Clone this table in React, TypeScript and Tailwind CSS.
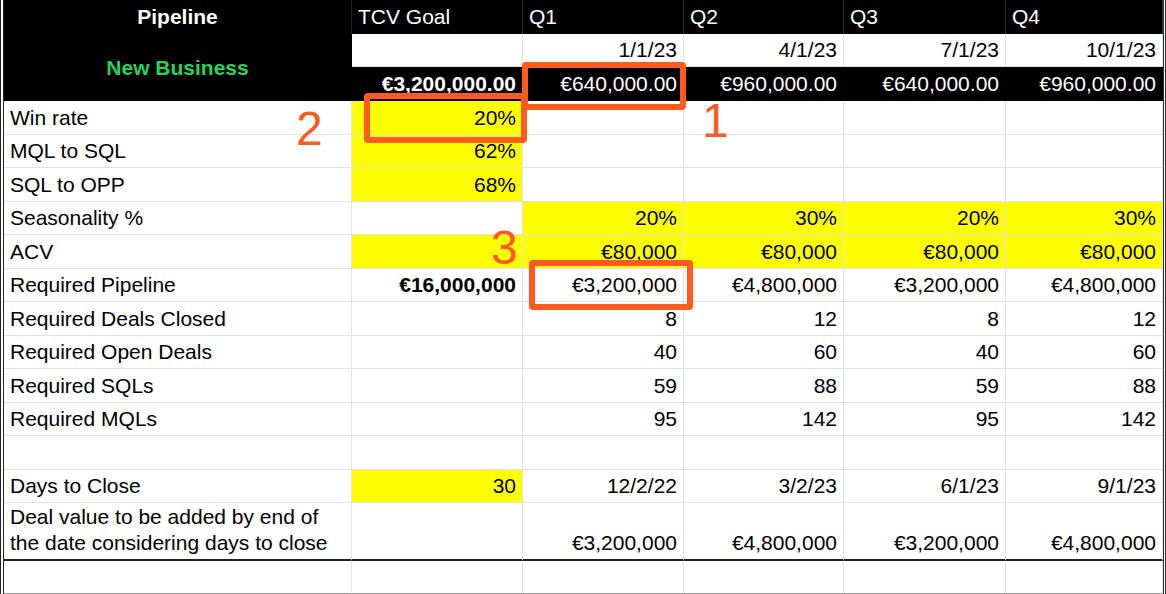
import React from "react";

// one cell of the sheet
type Cell = {
  text?: string;
  bg?: string;
  bold?: boolean;
};

const rows: { label: string; cells: Cell[] }[] = [
  {
    label: "Win rate",
    cells: [{ text: "20%", bg: "bg-[#ffff00]" }, {}, {}, {}, {}],
  },
  {
    label: "MQL to SQL",
    cells: [{ text: "62%", bg: "bg-[#ffff00]" }, {}, {}, {}, {}],
  },
  {
    label: "SQL to OPP",
    cells: [{ text: "68%", bg: "bg-[#ffff00]" }, {}, {}, {}, {}],
  },
  {
    label: "Seasonality %",
    cells: [
      {},
      { text: "20%", bg: "bg-[#ffff00]" },
      { text: "30%", bg: "bg-[#ffff00]" },
      { text: "20%", bg: "bg-[#ffff00]" },
      { text: "30%", bg: "bg-[#ffff00]" },
    ],
  },
  {
    label: "ACV",
    cells: [
      { bg: "bg-[#ffff00]" },
      { text: "€80,000", bg: "bg-[#ffff00]" },
      { text: "€80,000", bg: "bg-[#ffff00]" },
      { text: "€80,000", bg: "bg-[#ffff00]" },
      { text: "€80,000", bg: "bg-[#ffff00]" },
    ],
  },
  {
    label: "Required Pipeline",
    cells: [
      { text: "€16,000,000", bold: true },
      { text: "€3,200,000" },
      { text: "€4,800,000" },
      { text: "€3,200,000" },
      { text: "€4,800,000" },
    ],
  },
  {
    label: "Required Deals Closed",
    cells: [{}, { text: "8" }, { text: "12" }, { text: "8" }, { text: "12" }],
  },
  {
    label: "Required Open Deals",
    cells: [{}, { text: "40" }, { text: "60" }, { text: "40" }, { text: "60" }],
  },
  {
    label: "Required SQLs",
    cells: [{}, { text: "59" }, { text: "88" }, { text: "59" }, { text: "88" }],
  },
  {
    label: "Required MQLs",
    cells: [{}, { text: "95" }, { text: "142" }, { text: "95" }, { text: "142" }],
  },
  {
    label: "",
    cells: [{}, {}, {}, {}, {}],
  },
  {
    label: "Days to Close",
    cells: [
      { text: "30", bg: "bg-[#ffff00]" },
      { text: "12/2/22" },
      { text: "3/2/23" },
      { text: "6/1/23" },
      { text: "9/1/23" },
    ],
  },
];

const quarters = ["Q1", "Q2", "Q3", "Q4"];
const dates = ["1/1/23", "4/1/23", "7/1/23", "10/1/23"];
const targets = ["€640,000.00", "€960,000.00", "€640,000.00", "€960,000.00"];
const dealValues = ["€3,200,000", "€4,800,000", "€3,200,000", "€4,800,000"];

const App = () => {
  return (
    <div
      className="relative w-[1166px] h-[594px] overflow-hidden bg-white text-[21px] text-black"
      style={{ fontFamily: '"Liberation Sans", Arial, Helvetica, sans-serif' }}
    >
      <div className="grid grid-cols-[348px_171px_161px_160px_162px_157px] grid-rows-[34px_33px_34px_repeat(12,33.5px)_58px_33px] border-l-4 border-double border-l-[#222] border-r-[3px] border-r-[#333]">
        {/* header rows */}
        <div className="bg-black text-white font-bold flex items-center justify-center border-r border-[#222]">
          Pipeline
        </div>
        <div className="bg-black text-white flex items-center px-[6px] border-r border-[#2a2a2a]">
          TCV Goal
        </div>
        {quarters.map((q) => (
          <div
            key={q}
            className="bg-black text-white flex items-center px-[6px] border-r border-[#2a2a2a]"
          >
            {q}
          </div>
        ))}

        <div className="row-span-2 bg-black text-[#27d35a] font-bold flex items-center justify-center border-r border-black">
          New Business
        </div>
        <div className="bg-white border-r border-b border-[#e2e2e2]" />
        {dates.map((d) => (
          <div
            key={d}
            className="bg-white flex items-center justify-end px-[6px] border-r border-b border-[#e2e2e2]"
          >
            {d}
          </div>
        ))}

        <div className="bg-black text-white font-bold flex items-center justify-end px-[6px] border-r border-black">
          €3,200,000.00
        </div>
        {targets.map((t, i) => (
          <div
            key={i}
            className="bg-black text-white flex items-center justify-end px-[6px] border-r border-black"
          >
            {t}
          </div>
        ))}

        {/* body rows */}
        {rows.map((row, r) => (
          <React.Fragment key={r}>
            <div className="flex items-center px-[6px] border-r border-b border-[#e2e2e2] whitespace-nowrap">
              {row.label}
            </div>
            {row.cells.map((c, i) => (
              <div
                key={i}
                className={`flex items-center justify-end px-[6px] border-r border-b border-[#e2e2e2] ${
                  c.bg ?? "bg-white"
                } ${c.bold ? "font-bold" : ""}`}
              >
                {c.text}
              </div>
            ))}
          </React.Fragment>
        ))}

        {/* two line row */}
        <div className="flex items-end px-[6px] pb-[3px] leading-[26px] border-r border-[#e2e2e2] border-b-2 border-b-[#222] whitespace-nowrap">
          Deal value to be added by end of
          <br />
          the date considering days to close
        </div>
        <div className="border-r border-[#e2e2e2] border-b-2 border-b-[#222]" />
        {dealValues.map((v, i) => (
          <div
            key={i}
            className="flex items-end justify-end px-[6px] pb-[3px] leading-[26px] border-r border-[#e2e2e2] border-b-2 border-b-[#222]"
          >
            {v}
          </div>
        ))}

        {/* trailing empty row */}
        {[0, 1, 2, 3, 4, 5].map((i) => (
          <div key={i} className="border-r border-b border-[#e2e2e2] border-b-[#999]" />
        ))}
      </div>

      {/* orange annotations */}
      <div className="absolute left-[522px] top-[62px] w-[164px] h-[48px] border-[6px] border-[#ff5a1f] rounded-[4px]" />
      <div className="absolute left-[364px] top-[93px] w-[163px] h-[50px] border-[6px] border-[#ff5a1f] rounded-[4px]" />
      <div className="absolute left-[529px] top-[260px] w-[164px] h-[50px] border-[6px] border-[#ff5a1f] rounded-[4px]" />

      <div className="absolute left-[702px] top-[97px] text-[48px] leading-[48px] text-[#ff5a1f]">1</div>
      <div className="absolute left-[296px] top-[105px] text-[48px] leading-[48px] text-[#ff5a1f]">2</div>
      <div className="absolute left-[491px] top-[224px] text-[48px] leading-[48px] text-[#ff5a1f]">3</div>
    </div>
  );
};

export default App;
